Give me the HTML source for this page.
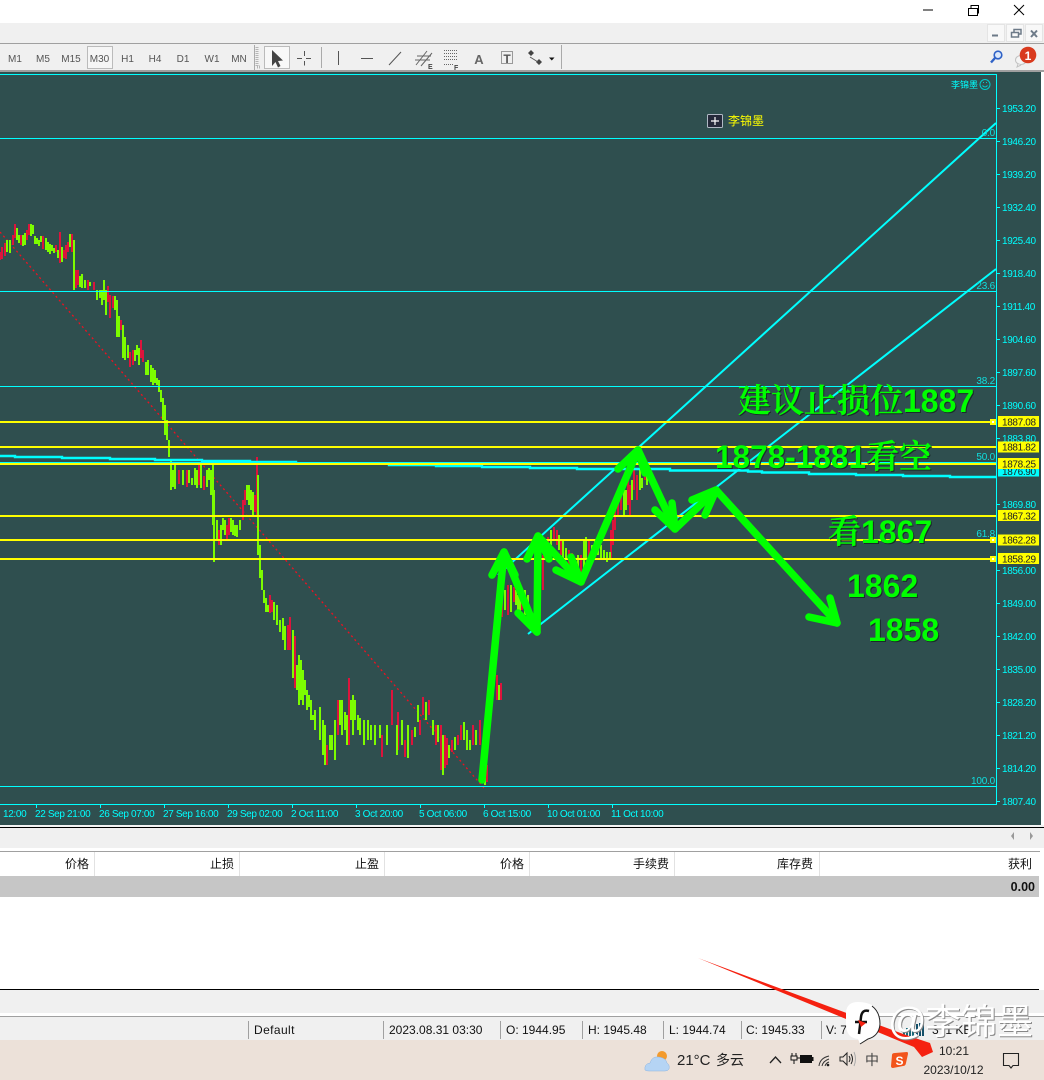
<!DOCTYPE html>
<html><head><meta charset="utf-8"><style>
html,body{margin:0;padding:0;width:1044px;height:1080px;overflow:hidden;background:#fff}
svg{display:block}
text{font-family:"Liberation Sans","Noto Sans CJK SC",sans-serif}
.tb{font-size:10px;fill:#555;text-anchor:middle}
.ax{font-size:10px;fill:#0ff;letter-spacing:-.35px}
.fb{font-size:10px;fill:#10dede;text-anchor:end;letter-spacing:-.2px}
.yl{font-size:10px;fill:#222;letter-spacing:-.35px}
.hd{font-size:12px;fill:#111;text-anchor:end}
.st{font-size:12px;fill:#111}
.big{font-size:32px;font-weight:bold;fill:#0f0}
.cn{font-family:"Noto Serif CJK SC","Liberation Serif",serif;font-size:33px;font-weight:600;fill:#0f0;stroke:#0f0;stroke-width:.4px}
</style></head><body>
<svg width="1044" height="1080" viewBox="0 0 1044 1080" xmlns="http://www.w3.org/2000/svg">
<rect width="1044" height="1080" fill="#fff"/>
<rect y="23" width="1044" height="20" fill="#f0f0f0"/>
<rect y="43" width="1044" height="1" fill="#a0a0a0"/>
<rect y="44" width="1044" height="26" fill="#f0f0f0"/>
<rect y="70" width="1044" height="2" fill="#a0a0a0"/>
<!-- window buttons -->
<path d="M923 10H933" stroke="#000" fill="none"/>
<path d="M968.500 8.500H977.500V15.500H968.500ZM971 8.500V5.500H978.500V13H977.500" stroke="#000" fill="none"/>
<path d="M1014 5L1024 15M1024 5L1014 15" stroke="#000" fill="none"/>
<g fill="#f8f8f8" stroke="#e4e4e4"><rect x="987.500" y="24.500" width="17" height="17"/><rect x="1006.500" y="24.500" width="17" height="17"/><rect x="1025.500" y="24.500" width="17" height="17"/></g>
<path d="M992 35.500H998" stroke="#6d7a88" stroke-width="2"/>
<path d="M1011.500 32.500H1018.500V37H1011.500ZM1014 32V29.500H1021V34H1019" stroke="#6d7a88" stroke-width="1.500" fill="none"/>
<path d="M1031 30.500L1037 37M1037 30.500L1031 37" stroke="#6d7a88" stroke-width="2" fill="none"/>
<!-- toolbar -->
<g class="tb">
<text x="15" y="62" class="tb">M1</text><text x="43" y="62" class="tb">M5</text><text x="71" y="62" class="tb">M15</text>
<rect x="87.500" y="46.500" width="25" height="22" fill="#f6f6f6" stroke="#bbb"/>
<text x="99.500" y="62" class="tb">M30</text><text x="127.500" y="62" class="tb">H1</text><text x="155" y="62" class="tb">H4</text><text x="183" y="62" class="tb">D1</text><text x="212" y="62" class="tb">W1</text><text x="239" y="62" class="tb">MN</text>
</g>
<path d="M254.500 45V70" stroke="#aaa"/>
<path d="M257 47V67h4" stroke="#b5b5b5" stroke-width="3" stroke-dasharray="1 1" fill="none"/>
<rect x="264.500" y="46.500" width="25" height="22" fill="#f8f8f8" stroke="#bbb"/>
<path d="M272 50L272 66L275.500 62L278 67.500L280.500 66L278 61L283 60.500Z" fill="#444"/>
<path d="M297 58.500H302M306 58.500H311M304.500 51V56M304.500 61V65.500" stroke="#555" fill="none"/>
<path d="M321.500 47V68" stroke="#aaa" stroke-width="1"/>
<path d="M338.500 51V65M361 58.500H373M389 65L401 52" stroke="#555" fill="none"/>
<path d="M416 65L427 51M421 66L432 53M415 60L430 60M417 56L431 56" stroke="#666" fill="none"/>
<text x="428" y="69" font-size="7" font-weight="bold" fill="#444">E</text>
<path d="M444 50.500H458M444 53.500H458M444 56.500H458M444 59.500H458M444 64.500H454" stroke="#666" stroke-dasharray="1 1" fill="none"/>
<text x="454" y="70" font-size="7" font-weight="bold" fill="#444">F</text>
<text x="479" y="64" font-size="13" font-weight="bold" fill="#666" text-anchor="middle">A</text>
<rect x="501.500" y="51.500" width="11" height="12" fill="none" stroke="#444" stroke-dasharray="1 1"/>
<text x="507" y="63" font-size="12" font-weight="bold" fill="#555" text-anchor="middle">T</text>
<path d="M528 53L531 50L534 53L531 56ZM536 62L539 59L542 62L539 65Z" fill="#444"/><path d="M530 57L538 62" stroke="#555"/>
<path d="M549 57.500H554.500L551.800 60.500Z" fill="#111"/>
<path d="M561.500 45V69" stroke="#aaa"/>
<!-- magnifier & mail -->
<circle cx="998" cy="55" r="3.800" fill="#dbe8fb" stroke="#2f62c7" stroke-width="1.600"/>
<path d="M995 58L991 62.500" stroke="#2f62c7" stroke-width="2.400"/>
<ellipse cx="1021" cy="60" rx="5.500" ry="4.500" fill="#f4f4f4" stroke="#c2c2c2"/>
<path d="M1018 64L1017 67L1021 65" fill="#f4f4f4" stroke="#c2c2c2"/>
<circle cx="1028" cy="55" r="8.300" fill="#d93a1e"/>
<text x="1028" y="60" font-size="12" font-weight="bold" fill="#fff" text-anchor="middle">1</text>
<!-- chart -->
<rect y="72" width="1041" height="753" fill="#2f4f4f"/>
<path d="M0 74.500H996.500V804.500H0" fill="none" stroke="#0ff"/>
<!-- dotted -->
<path d="M0 232L484 788" stroke="#f01020" stroke-width="1.300" stroke-dasharray="2 3" fill="none"/>
<!-- candles red -->
<path fill="none" shape-rendering="crispEdges" stroke="#dc143c" stroke-width="2" d="M0 252V260M2 247V259M5 243V256M13 235V245M15 224V238M21 235V245M27 230V240M29 224V235M43 236V249M56 245V252M60 232V263M64 250V258M66 245V259M68 242V252M72 234V252M76 270V288M78 270V285M88 280V290M94 282V290M108 286V302M110 295V318M113 296V308M121 320V330M130 352V367M133 350V365M141 340V358M143 350V362M179 470V484M187 470V487M199 465V485M204 476V490M219 530V545M227 525V540M229 518V535M243 500V520M245 490V505M255 495V512M257 457V515M270 595V613M272 600V612M288 625V650M290 617V650M295 636V688M327 745V765M338 700V735M349 678V745M382 735V757M392 690V725M398 712V750M405 740V757M412 730V745M420 720V735M423 697V715M429 700V715M436 725V745M441 725V770M445 735V768M447 738V765M452 740V752M458 735V745M461 725V740M473 725V745M480 720V745M487 765V782M497 675V700M501 683V700M502 597V617M508 585V615M514 587V602M522 590V610M540 565V610M543 555V590M548 537V547M554 527V540M557 530V545M561 540V555M569 550V565M572 553V570M575 560V572M581 555V585M589 540V560M611 530V560M613 520V545M615 510V530M618 495V515M621 490V510M628 480V505M630 485V515M634 470V490M637 475V500M645 468V480M649 470V480"/>
<!-- candles green -->
<path fill="none" shape-rendering="crispEdges" stroke="#7cfc00" stroke-width="2" d="M7 240V252M10 240V253M17 228V240M19 235V243M23 235V246M25 233V245M31 224V236M33 225V234M35 236V244M37 238V244M39 240V246M41 236V242M46 238V250M48 242V252M50 244V254M52 245V251M54 248V253M58 250V258M62 247V262M70 234V247M74 240V290M80 276V287M82 274V288M85 280V288M90 282V286M97 290V300M100 290V298M102 290V305M104 280V300M106 290V315M115 296V310M117 300V337M119 316V337M123 325V358M125 337V360M128 345V358M135 350V361M137 345V355M139 348V365M146 362V375M148 360V375M151 365V382M153 368V385M155 370V383M157 378V385M159 380V392M161 390V402M163 398V420M165 405V435M167 420V440M169 440V457M171 460V490M173 470V487M175 465V489M183 470V485M189 470V483M192 478V485M195 468V485M197 470V488M201 464V488M207 470V487M209 468V480M211 470V495M213 465V525M214 490V562M217 520V540M221 525V545M223 518V530M225 520V535M231 518V532M233 520V535M235 525V536M237 525V537M240 520V530M247 485V500M249 485V505M251 490V510M253 492V515M258 475V555M260 545V578M262 570V590M264 590V603M266 598V612M268 605V612M274 602V620M277 605V625M280 620V632M283 618V640M285 626V650M293 630V678M297 665V690M299 655V705M301 660V700M303 670V705M305 680V695M307 690V710M309 695V707M311 700V720M313 715V720M315 710V730M320 707V740M323 720V755M325 725V765M330 735V750M332 735V750M335 720V760M340 700V725M342 700V735M345 712V730M347 715V745M351 700V720M353 695V735M355 700V720M358 715V730M360 718V735M364 720V745M368 720V740M371 725V740M375 725V745M380 725V738M387 725V745M397 725V755M402 720V745M408 725V758M415 727V737M418 705V722M426 702V720M433 720V735M438 725V742M443 735V775M449 745V758M455 737V750M464 722V740M467 730V750M470 740V750M476 730V745M483 740V770M485 770V785M499 685V700M505 590V610M511 585V612M516 590V605M518 595V610M520 590V612M525 590V615M528 595V612M551 530V545M559 535V550M563 540V560M566 548V558M578 555V570M584 540V570M586 537V560M592 545V560M595 540V555M598 543V555M601 545V558M604 550V560M607 552V562M610 552V558M624 490V515M626 490V510M632 480V500M640 470V490M642 478V488M647 472V485"/>
<!-- fib lines -->
<g stroke="#0ff" stroke-width="1" fill="none"><path d="M0 138.500H996M0 291.500H996M0 386.500H996M0 462.500H996M0 539.500H996M0 786.500H996"/></g>
<!-- channels -->
<path d="M498 575L996 123M528 634L996 269" stroke="#0ff" stroke-width="2" fill="none"/>
<!-- MA -->
<path d="M0 456H15V457H62V458H110V459H155V460H202V461H250V462H296V463.500H389V465H436V466H482V467H530V468H577V469H670V470.500H748V471.500H762V472.500H809V474H856V475H903V476H950V477H996" stroke="#0ff" stroke-width="2.400" fill="none"/>
<!-- yellow lines -->
<g fill="#ff0"><rect y="421" width="996" height="2"/><rect y="446" width="996" height="2"/><rect y="463" width="996" height="2"/><rect y="515" width="996" height="2"/><rect y="539" width="996" height="2"/><rect y="558" width="996" height="2"/></g>
<g fill="#ff0"><rect x="990" y="419" width="6" height="6"/><rect x="990" y="537" width="6" height="6"/><rect x="990" y="556" width="6" height="6"/></g>
<g fill="#fff"><rect x="992" y="421" width="2" height="2"/><rect x="992" y="539" width="2" height="2"/><rect x="992" y="558" width="2" height="2"/></g>
<!-- fib labels -->
<text class="fb" x="995" y="136">0.0</text><text class="fb" x="995" y="289">23.6</text><text class="fb" x="995" y="384">38.2</text><text class="fb" x="995" y="460">50.0</text><text class="fb" x="995" y="537">61.8</text><text class="fb" x="995" y="784">100.0</text>
<!-- axis -->
<path stroke="#0ff" fill="none" d="M997 108.500H1000M997 141.500H1000M997 174.500H1000M997 207.500H1000M997 240.500H1000M997 273.500H1000M997 306.500H1000M997 339.500H1000M997 372.500H1000M997 405.500H1000M997 438.500H1000M997 504.500H1000M997 570.500H1000M997 603.500H1000M997 636.500H1000M997 669.500H1000M997 702.500H1000M997 735.500H1000M997 768.500H1000M997 801.500H1000M36.500 805V808M100.500 805V808M164.500 805V808M228.500 805V808M292.500 805V808M356.500 805V808M420.500 805V808M484.500 805V808M548.500 805V808M612.500 805V808"/>
<g class="ax">
<text x="1002" y="112" class="ax">1953.20</text><text x="1002" y="145" class="ax">1946.20</text><text x="1002" y="178" class="ax">1939.20</text><text x="1002" y="211" class="ax">1932.40</text><text x="1002" y="244" class="ax">1925.40</text><text x="1002" y="277" class="ax">1918.40</text><text x="1002" y="310" class="ax">1911.40</text><text x="1002" y="343" class="ax">1904.60</text><text x="1002" y="376" class="ax">1897.60</text><text x="1002" y="409" class="ax">1890.60</text><text x="1002" y="442" class="ax">1883.80</text><text x="1002" y="508" class="ax">1869.80</text><text x="1002" y="574" class="ax">1856.00</text><text x="1002" y="607" class="ax">1849.00</text><text x="1002" y="640" class="ax">1842.00</text><text x="1002" y="673" class="ax">1835.00</text><text x="1002" y="706" class="ax">1828.20</text><text x="1002" y="739" class="ax">1821.20</text><text x="1002" y="772" class="ax">1814.20</text><text x="1002" y="805" class="ax">1807.40</text>
</g>
<rect x="998" y="465.500" width="41" height="11" fill="#0ff"/><text class="yl" x="1002" y="475">1876.90</text>
<g fill="#ff0"><rect x="998" y="416" width="41" height="11"/><rect x="998" y="441.500" width="41" height="11"/><rect x="998" y="458" width="41" height="11"/><rect x="998" y="510" width="41" height="11"/><rect x="998" y="534.500" width="41" height="11"/><rect x="998" y="553" width="41" height="11"/></g>
<text class="yl" x="1002" y="425.500">1887.08</text><text class="yl" x="1002" y="450.500">1881.82</text><text class="yl" x="1002" y="467.500">1878.25</text><text class="yl" x="1002" y="519.500">1867.32</text><text class="yl" x="1002" y="543.500">1862.28</text><text class="yl" x="1002" y="562.500">1858.29</text>
<!-- time axis -->
<g>
<text class="ax" x="3" y="817">12:00</text><text class="ax" x="35" y="817">22 Sep 21:00</text><text class="ax" x="99" y="817">26 Sep 07:00</text><text class="ax" x="163" y="817">27 Sep 16:00</text><text class="ax" x="227" y="817">29 Sep 02:00</text><text class="ax" x="291" y="817">2 Oct 11:00</text><text class="ax" x="355" y="817">3 Oct 20:00</text><text class="ax" x="419" y="817">5 Oct 06:00</text><text class="ax" x="483" y="817">6 Oct 15:00</text><text class="ax" x="547" y="817">10 Oct 01:00</text><text class="ax" x="611" y="817">11 Oct 10:00</text>
</g>
<!-- top right labels -->
<text x="951" y="88" font-size="9" fill="#0ff">李锦墨</text>
<circle cx="985" cy="84.500" r="5" fill="none" stroke="#0cc"/><path d="M982.500 85.500Q985 88.500 987.500 85.500M983 82.500H984M986 82.500H987" stroke="#0cc" fill="none"/>
<rect x="707.500" y="114.500" width="15" height="13" rx="1" fill="#25293a" stroke="#b0b8c4"/>
<path d="M711 121H719M715 117V125" stroke="#fff" stroke-width="1.200"/>
<text x="728" y="125" font-size="12" fill="#ff0">李锦墨</text>
<!-- green arrows -->
<g fill="none" stroke="#0f0" stroke-width="7.500" stroke-linecap="round" stroke-linejoin="round">
<path d="M482 780L504 552L537 632L538 536L581 582L638 450L675 529L716 490L837 623"/>
<path d="M492 575L504 552L515 575M518 613L537 632M527 559L538 536L549 559M556 570L581 582L571 557M618 469L638 450L645 473M655 510L675 529L672 503M692 500L716 490L705 515M830 598L837 623L809 617"/>
</g>
<!-- green text -->
<g style="filter:drop-shadow(1.500px 1.500px 0 #1a2a2a)">
<text class="cn" x="738" y="412">建议止损位</text><text class="big" x="903" y="412">1887</text>
<text class="big" x="715" y="468" textLength="151" lengthAdjust="spacingAndGlyphs">1878-1881</text><text class="cn" x="866" y="468">看空</text>
<text class="cn" x="828" y="543">看</text><text class="big" x="861" y="543">1867</text>
<text class="big" x="847" y="597">1862</text><text class="big" x="868" y="641">1858</text>
</g>
<!-- lower panels -->
<rect y="825" width="1044" height="2" fill="#f4f4f4"/>
<rect y="827" width="1044" height="1" fill="#000"/>
<rect y="828" width="1044" height="20" fill="#f0f0f0"/>
<rect y="851" width="1040" height="1" fill="#a0a0a0"/>
<rect y="852" width="1040" height="24" fill="#fff"/>
<path d="M1011 836L1014 832V840ZM1033 836L1030 832V840Z" fill="#999"/>
<path d="M94.500 852V876M239.500 852V876M384.500 852V876M529.500 852V876M674.500 852V876M819.500 852V876" stroke="#e2e2e2"/>
<text class="hd" x="89" y="868">价格</text><text class="hd" x="234" y="868">止损</text><text class="hd" x="379" y="868">止盈</text><text class="hd" x="524" y="868">价格</text><text class="hd" x="669" y="868">手续费</text><text class="hd" x="813" y="868">库存费</text><text class="hd" x="1032" y="868">获利</text>
<rect y="876" width="1039" height="21" fill="#c6c6c6"/>
<text x="1035" y="891" font-size="12.500" font-weight="bold" fill="#111" text-anchor="end">0.00</text>
<rect y="989" width="1039" height="1" fill="#000"/>
<rect y="990" width="1044" height="23" fill="#f0f0f0"/>
<rect y="1016" width="1044" height="1" fill="#a0a0a0"/>
<rect y="1017" width="1044" height="23" fill="#f0f0f0"/>
<path d="M248.500 1021V1039M383.500 1021V1039M500.500 1021V1039M582.500 1021V1039M663.500 1021V1039M741.500 1021V1039M821.500 1021V1039" stroke="#a0a0a0"/>
<g class="st">
<text class="st" x="254" y="1034" letter-spacing=".4">Default</text><text class="st" x="389" y="1034">2023.08.31 03:30</text><text class="st" x="506" y="1034">O: 1944.95</text><text class="st" x="588" y="1034">H: 1945.48</text><text class="st" x="669" y="1034">L: 1944.74</text><text class="st" x="746" y="1034">C: 1945.33</text><text class="st" x="826" y="1034">V: 7</text>
</g>
<path d="M904 1036V1030M907 1036V1028M910 1036V1027M913 1036V1026" stroke="#1a6a7a" stroke-width="2"/>
<path d="M917 1036V1024M920 1036V1023M923 1036V1023" stroke="#14506a" stroke-width="2"/>
<text class="st" x="932" y="1034">3 /1 KB</text>
<!-- taskbar -->
<rect y="1040" width="1044" height="40" fill="#ece1d9"/>
<circle cx="662" cy="1056" r="5" fill="#f39a2c"/>
<path d="M645 1070Q644 1064 650 1063Q652 1056 659 1057Q666 1058 667 1063Q670 1065 669 1069Q668 1071 665 1071H649Q646 1071 645 1070Z" fill="#b5d4f4" stroke="#8db4e0" stroke-width=".500"/>
<text x="677" y="1065" font-size="15" fill="#222">21°C</text>
<text x="716" y="1065" font-size="14" fill="#222">多云</text>
<path d="M770 1063L775.500 1057L781 1063" fill="none" stroke="#222" stroke-width="1.300"/>
<path d="M792 1056V1053M796 1056V1053" stroke="#111"/><path d="M791 1056H797V1060H791ZM797 1058H800" fill="none" stroke="#111"/>
<rect x="800" y="1055" width="12" height="8" fill="#111"/><rect x="812" y="1057" width="1.500" height="4" fill="#111"/><path d="M794 1060V1064" stroke="#111"/>
<path d="M819 1066Q820 1058 829 1056M822 1066Q823 1061 829 1059M825 1066Q826 1063 829 1062" fill="none" stroke="#333"/><circle cx="828" cy="1065" r="1.300" fill="#222"/>
<path d="M840 1057H843L847 1053V1065L843 1061H840Z" fill="none" stroke="#222"/><path d="M849 1056Q851 1059 849 1062M851 1054Q854 1059 851 1064" fill="none" stroke="#222"/><path d="M854 1052Q857 1059 854 1066" fill="none" stroke="#aaa"/>
<text x="872" y="1065" font-size="14" fill="#444" text-anchor="middle">中</text>
<path d="M892 1055Q892 1053 895 1053L907 1052Q908 1052 908 1054L906 1063Q905.500 1066 903 1066L893 1068Q891 1068 891 1066Z" fill="#f2541b"/>
<text x="899.500" y="1065" font-size="12" font-weight="bold" fill="#fff" text-anchor="middle">S</text>
<text x="954" y="1055" font-size="12" fill="#222" text-anchor="middle">10:21</text>
<text x="953.500" y="1074" font-size="12" fill="#222" text-anchor="middle">2023/10/12</text>
<path d="M1003.500 1053.500H1018.500V1065.500H1013L1011 1068L1009 1065.500H1003.500Z" fill="none" stroke="#222" stroke-width="1.100"/>
<!-- red annotation arrow -->
<path d="M698 958L906 1035L930 1043L933 1052L922 1057L914 1047Z" fill="#f52110"/>
<!-- watermark -->
<path d="M858 1002Q881 1002 880 1024Q879 1036 868 1039L860 1044L858 1039Q846 1038 846 1024L846 1012Q847 1002 858 1002Z" fill="#fff"/>
<path d="M872 1006Q880 1012 880 1024Q879 1036 868 1039L860 1044" fill="none" stroke="#222" stroke-width="1"/>
<path d="M869 1011Q862 1009 861 1017L859 1034M855 1022H867" fill="none" stroke="#111" stroke-width="2.500"/>
<path d="M858 1020L866 1023L861 1027Z" fill="#f52110"/>
<g style="filter:drop-shadow(1px 1px 0 #888)">
<text x="888" y="1034" font-size="38" fill="#fff">@</text>
<text x="925" y="1034" font-size="36" fill="#fff">李锦墨</text>
</g>
</svg>
</body></html>
